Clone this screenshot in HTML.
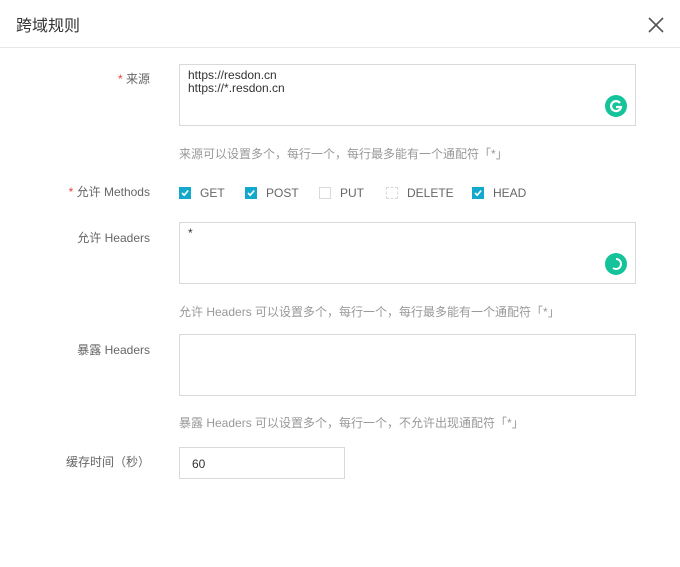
<!DOCTYPE html>
<html><head><meta charset="utf-8"><style>
*{box-sizing:border-box;margin:0;padding:0}
body{width:680px;height:567px;background:#fff;font-family:"Liberation Sans","Noto Sans CJK SC",sans-serif;color:#333;font-size:12px;position:relative;overflow:hidden}
.a{position:absolute}
.hd{left:0;top:0;width:680px;height:48px;border-bottom:1px solid #e8e8e8}
.title{left:16px;top:12px;font-size:16px;color:#333}
.lbl{right:530px;color:#666;font-size:12px;white-space:nowrap}
.req{color:#e8413c}
.ta{left:179px;width:457px;height:62px;border:1px solid #d9d9d9;padding:4px 8px;line-height:13px;font-size:12px;color:#333}
.hint{left:179px;color:#999;font-size:12px}
.cb{display:inline-block;width:12px;height:12px;vertical-align:-2px;margin-right:9px;border:1px solid #d9d9d9;background:#fff}
.cb.on{background:#12a9cc;border-color:#12a9cc;position:relative}
.m{top:186px;color:#666;white-space:nowrap}
.g{width:22px;height:22px;border-radius:50%;background:#15c39a}
</style></head><body>
<div class="a hd"></div>
<div class="a title">跨域规则</div>
<svg class="a" style="left:648px;top:17px" width="16" height="16" viewBox="0 0 16 16"><path d="M1 1L15 15M15 1L1 15" stroke="#555" stroke-width="1.6"/></svg>

<div class="a lbl" style="top:70px"><span class="req">* </span>来源</div>
<div class="a ta" style="top:64px">https://resdon.cn<br>https://*.resdon.cn</div>
<div class="a g" style="left:605px;top:95px"></div>
<svg class="a" style="left:605px;top:95px" width="22" height="22" viewBox="0 0 22 22"><path d="M15 8A5 5 0 1 0 16 12H11" stroke="#fff" stroke-width="2.2" fill="none"/></svg>
<div class="a hint" style="top:145px">来源可以设置多个，每行一个，每行最多能有一个通配符「*」</div>

<div class="a lbl" style="top:183px"><span class="req">* </span>允许 Methods</div>
<div class="a m" style="left:179px"><span class="cb on"><svg class="a" style="left:0;top:0" width="10" height="10" viewBox="0 0 10 10"><path d="M2 5L4.2 7.2L8.2 2.5" stroke="#fff" stroke-width="1.6" fill="none"/></svg></span>GET</div>
<div class="a m" style="left:245px"><span class="cb on"><svg class="a" style="left:0;top:0" width="10" height="10" viewBox="0 0 10 10"><path d="M2 5L4.2 7.2L8.2 2.5" stroke="#fff" stroke-width="1.6" fill="none"/></svg></span>POST</div>
<div class="a m" style="left:319px"><span class="cb"></span>PUT</div>
<div class="a m" style="left:386px"><span class="cb" style="border-style:dashed"></span>DELETE</div>
<div class="a m" style="left:472px"><span class="cb on"><svg class="a" style="left:0;top:0" width="10" height="10" viewBox="0 0 10 10"><path d="M2 5L4.2 7.2L8.2 2.5" stroke="#fff" stroke-width="1.6" fill="none"/></svg></span>HEAD</div>

<div class="a lbl" style="top:229px">允许 Headers</div>
<div class="a ta" style="top:222px">*</div>
<div class="a g" style="left:605px;top:253px"></div>
<svg class="a" style="left:605px;top:253px" width="22" height="22" viewBox="0 0 22 22"><path d="M11 6A5 5 0 1 1 8 15" stroke="#fff" stroke-width="2" fill="none"/></svg>
<div class="a hint" style="top:303px">允许 Headers 可以设置多个，每行一个，每行最多能有一个通配符「*」</div>

<div class="a lbl" style="top:341px">暴露 Headers</div>
<div class="a ta" style="top:334px"></div>
<div class="a hint" style="top:414px">暴露 Headers 可以设置多个，每行一个，不允许出现通配符「*」</div>

<div class="a lbl" style="top:453px">缓存时间（秒）</div>
<div class="a" style="left:179px;top:447px;width:166px;height:32px;border:1px solid #d9d9d9;padding:9px 12px;color:#333">60</div>
</body></html>
